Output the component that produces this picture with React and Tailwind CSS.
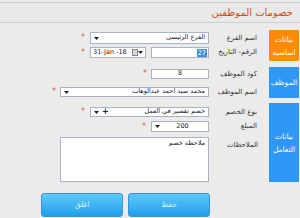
import React from 'react';

const Arrow = () => (
  <svg width="5" height="3" viewBox="0 0 5 3" className="shrink-0">
    <path d="M0 0h5L2.5 3z" fill="#222" />
  </svg>
);

const Star = ({ className = '' }) => (
  <span className={`text-[8px] leading-none text-[#e2525a] ${className}`}>*</span>
);

function Row({ label, children, className = '' }) {
  return (
    <div className={`flex items-center ${className}`}>
      <div className="w-[49px] shrink-0 text-[7px] leading-none text-[#333] pr-[1px]">{label}</div>
      {children}
    </div>
  );
}

function Tab({ color, className = '', children }) {
  return (
    <div className={`w-[30px] shrink-0 flex items-center justify-center text-center text-white text-[7.5px] leading-[13px] ${color} ${className}`}>
      <div>{children}</div>
    </div>
  );
}

export default function App() {
  return (
    <div
      dir="rtl"
      className="w-[300px] h-[218px] overflow-hidden bg-[#ebebeb] pt-[2px]"
      style={{ fontFamily: '"DejaVu Sans", sans-serif' }}
    >
      {/* Header */}
      <div className="h-[21px] border-t border-b border-[#cdcdcd] bg-[#e9e9e9] flex items-center pr-[7px]">
        <span className="text-[10px] text-[#c5511d] leading-none">خصومات الموظفين</span>
      </div>

      {/* Basic data */}
      <div className="flex mt-[7px] mr-[1px]">
        <Tab color="bg-[#ff8a05]" className="h-[31px]">بيانات<br />اساسية</Tab>
        <div className="mr-[11px] pt-[2px]">
          <Row label="اسم الفرع">
            <div className="w-[119px] h-[12px] bg-white border border-[#a9b4c2] flex items-center justify-between px-[3px] text-[6.5px] text-[#222]">
              <span>الفرع الرئيسي</span>
              <Arrow />
            </div>
            <Star className="mr-[5px]" />
          </Row>
          <Row label="الرقم- التاريخ" className="mt-[3px]">
            <div className="w-[58px] h-[11px] bg-white border border-[#a9b4c2] flex items-center px-[1px]">
              <span className="bg-[#3d8fdc] text-white text-[6.5px] leading-[8px] px-[1px]">27</span>
            </div>
            <div className="w-[56px] h-[11px] mr-[5px] bg-white border border-[#a9b4c2] flex items-center px-[2px] text-[6.5px] text-[#222]">
              <Arrow />
              <svg width="6" height="7" viewBox="0 0 6 7" className="ml-[2px] shrink-0">
                <rect x="0.5" y="0.5" width="5" height="6" fill="#d6d6d6" stroke="#888" />
              </svg>
              <span dir="ltr" className="flex-1 text-left">31-Jan -18</span>
            </div>
            <Star className="mr-[5px]" />
          </Row>
        </div>
      </div>

      {/* Employee */}
      <div className="flex mt-[6px] mr-[1px]">
        <Tab color="bg-[#2e97f8]" className="h-[31px]">الموظف</Tab>
        <div className="mr-[11px] pt-[2px]">
          <Row label="كود الموظف">
            <div className="w-[58px] h-[10px] bg-white border border-[#a9b4c2] flex items-center justify-center text-[6.5px] text-[#222]">8</div>
            <Star className="mr-[4px]" />
          </Row>
          <Row label="اسم الموظف" className="mt-[8px]">
            <div className="w-[149px] h-[10px] bg-white border border-[#a9b4c2] flex items-center justify-between px-[3px] text-[6.5px] text-[#222]">
              <span>محمد سيد احمد عبدالوهاب</span>
              <Arrow />
            </div>
            <Star className="mr-[4px]" />
          </Row>
        </div>
      </div>

      {/* Transaction data */}
      <div className="flex mt-[5px] mr-[1px]">
        <Tab color="bg-[#2e97f8]" className="h-[79px]">بيانات<br />التعامل</Tab>
        <div className="mr-[11px] pt-[4px]">
          <Row label="نوع الخصم">
            <div className="w-[119px] h-[10px] bg-white border border-[#a9b4c2] flex items-center justify-between px-[3px] text-[6.5px] text-[#222]">
              <span>خصم تقصير في العمل</span>
              <span className="flex items-center gap-[3px]">
                <span className="text-[8px] font-bold leading-none">+</span>
                <Arrow />
              </span>
            </div>
            <Star className="mr-[5px]" />
          </Row>
          <Row label="المبلغ" className="mt-[4px]">
            <div className="w-[58px] h-[11px] bg-white border border-[#a9b4c2] flex items-center px-[3px] text-[6.5px] text-[#222]">
              <span className="flex-1 text-center">200</span>
              <Arrow />
            </div>
            <Star className="mr-[5px]" />
          </Row>
          <div className="flex mt-[5px]">
            <div className="w-[49px] shrink-0 text-[7px] leading-none text-[#333] pt-[5px]">الملاحظات</div>
            <div className="w-[149px] h-[45px] bg-white border border-[#a9b4c2] px-[3px] pt-[2px] text-[6.5px] leading-none text-[#222]">
              ملاحظة خصم
            </div>
          </div>
        </div>
      </div>

      {/* Buttons */}
      <div className="flex gap-[5px] mt-[11px] mr-[90px]">
        <button className="w-[82px] h-[24px] rounded-[3px] border border-[#3a95d6] bg-gradient-to-b from-[#5cc8fb] to-[#1ba0ec] text-white/80 text-[7.5px]">حفظ</button>
        <button className="w-[82px] h-[24px] rounded-[3px] border border-[#3a95d6] bg-gradient-to-b from-[#5cc8fb] to-[#1ba0ec] text-white/80 text-[7.5px]">اغلق</button>
      </div>
    </div>
  );
}
